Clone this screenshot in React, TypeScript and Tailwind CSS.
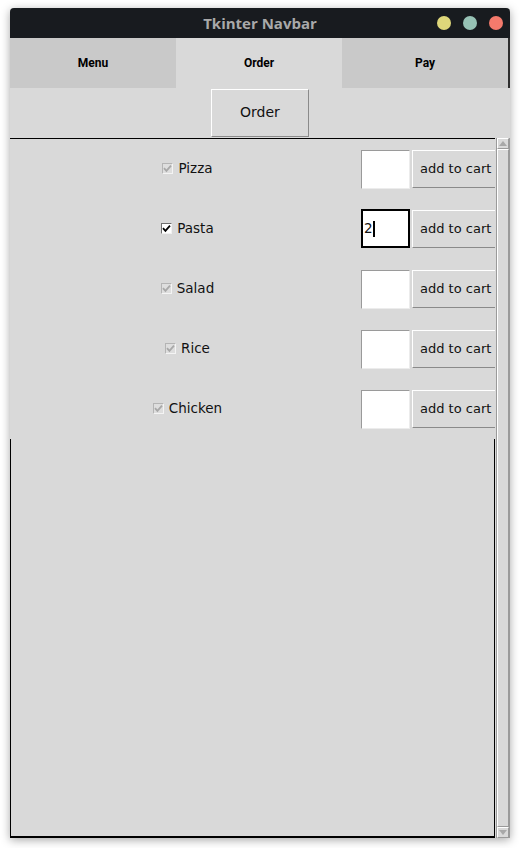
const items = [
  { name: "Pizza", checked: false, qty: "" },
  { name: "Pasta", checked: true, qty: "2" },
  { name: "Salad", checked: false, qty: "" },
  { name: "Rice", checked: false, qty: "" },
  { name: "Chicken", checked: false, qty: "" },
];

const tabs = [
  { label: "Menu", active: false },
  { label: "Order", active: true },
  { label: "Pay", active: false },
];

function Check({ on }: { on: boolean }) {
  return (
    <span
      className={
        on
          ? "w-[11px] h-[11px] flex items-center justify-center bg-white border border-t-[#6e6e6e] border-l-[#6e6e6e] border-b-[#f2f2f2] border-r-[#f2f2f2]"
          : "w-[11px] h-[11px] flex items-center justify-center bg-[#dedede] border border-t-[#b4b4b4] border-l-[#b4b4b4] border-b-[#f4f4f4] border-r-[#f4f4f4]"
      }
    >
      <svg width="9" height="9" viewBox="0 0 9 9">
        <path
          d="M1 4.2 L3.4 6.8 L8 1.6"
          fill="none"
          stroke={on ? "#000" : "#a8a8a8"}
          strokeWidth="1.8"
        />
      </svg>
    </span>
  );
}

function Row({ name, checked, qty }: { name: string; checked: boolean; qty: string }) {
  return (
    <div className="h-[60px] flex items-center overflow-hidden">
      <div className="w-[351px] shrink-0 flex items-center justify-center gap-[5px] pl-[4px] pb-[1px]">
        <Check on={checked} />
        <span className="text-[13.5px] text-[#111]">{name}</span>
      </div>
      {qty ? (
        <div className="w-[49px] h-[39px] shrink-0 bg-white border-2 border-black flex items-center pl-[1px] -mt-[1px]">
          <span className="text-[13.5px] text-[#111]">{qty}</span>
          <span className="w-[2px] h-[16px] bg-black" />
        </div>
      ) : (
        <div className="w-[49px] h-[39px] shrink-0 bg-white border border-t-[#9a9a9a] border-l-[#9a9a9a] border-b-[#ececec] border-r-[#ececec]" />
      )}
      <button className="ml-[2px] w-[86px] h-[38px] shrink-0 bg-[#d9d9d9] border border-t-white border-l-white border-b-[#8a8a8a] border-r-[#8a8a8a] text-[13px] text-[#111] text-left pl-[7px] pb-[1px]">
        add to cart
      </button>
    </div>
  );
}

function Arrow({ up }: { up: boolean }) {
  return (
    <div className="h-[11px] flex items-center justify-center border border-t-white border-l-white border-b-[#9a9a9a] border-r-[#9a9a9a]">
      <svg width="8" height="5" viewBox="0 0 8 5">
        <path d={up ? "M0 5 L4 0 L8 5 Z" : "M0 0 L8 0 L4 5 Z"} fill="#a8a8a8" />
      </svg>
    </div>
  );
}

export default function App() {
  return (
    <div className="min-h-[848px] bg-white pt-[8px] pl-[10px] font-['DejaVu_Sans',sans-serif]">
      <div className="w-[500px] h-[830px] flex flex-col bg-[#d9d9d9] rounded-t-[4px] shadow-[0_2px_10px_rgba(0,0,0,0.35)]">
        {/* title bar */}
        <div className="h-[30px] shrink-0 bg-[#181b1f] rounded-t-[4px] flex items-center relative">
          <span className="flex-1 text-center font-['Open_Sans',sans-serif] font-bold text-[15px] text-[#a9a9a9]">
            Tkinter Navbar
          </span>
          <div className="absolute right-[7px] top-[8px] flex gap-[12px]">
            <span className="w-[14px] h-[14px] rounded-full bg-[#ded77a]" />
            <span className="w-[14px] h-[14px] rounded-full bg-[#97c2b5]" />
            <span className="w-[14px] h-[14px] rounded-full bg-[#f47a6c]" />
          </div>
        </div>

        {/* tabs */}
        <div className="h-[50px] shrink-0 flex border-r-2 border-[#2e2e2e]">
          {tabs.map((t) => (
            <div
              key={t.label}
              className={
                t.active
                  ? "flex-1 flex items-center justify-center bg-[#d9d9d9] font-['Roboto',sans-serif] font-bold text-[12px] text-black"
                  : "flex-1 flex items-center justify-center bg-[#c9c9c9] font-['Roboto',sans-serif] font-bold text-[12px] text-black"
              }
            >
              {t.label}
            </div>
          ))}
        </div>

        {/* order button */}
        <div className="h-[50px] shrink-0 flex justify-center pt-[1px]">
          <button className="w-[98px] h-[48px] bg-[#d9d9d9] border border-t-white border-l-white border-b-[#8a8a8a] border-r-[#8a8a8a] text-[14px] text-[#111] pb-[2px]">
            Order
          </button>
        </div>

        {/* canvas + scrollbar */}
        <div className="flex-1 min-h-0 flex gap-px">
          <div className="w-[485px] flex flex-col border-t border-black">
            <div>
              {items.map((it) => (
                <Row key={it.name} {...it} />
              ))}
            </div>
            <div className="flex-1 border-x-[1.5px] border-b-2 border-black" />
          </div>
          <div className="w-[14px] flex flex-col border-x border-[#9a9a9a] bg-[#d9d9d9]">
            <Arrow up />
            <div className="flex-1 border border-t-white border-l-white border-b-[#9a9a9a] border-r-[#9a9a9a]" />
            <Arrow up={false} />
          </div>
        </div>
      </div>
    </div>
  );
}
